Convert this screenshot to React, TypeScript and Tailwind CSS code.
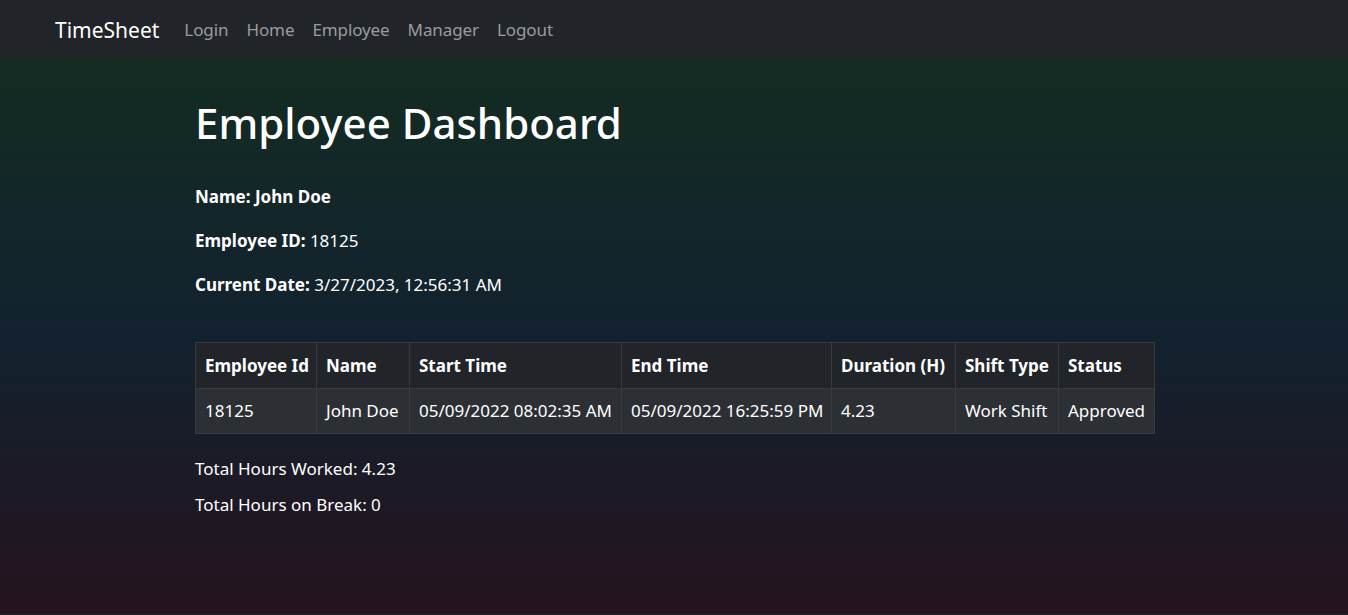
import React from 'react';

const navLinks = ['Login', 'Home', 'Employee', 'Manager', 'Logout'];

const columns: { label: string; width: string }[] = [
  { label: 'Employee Id', width: 'w-[121px]' },
  { label: 'Name', width: 'w-[93px]' },
  { label: 'Start Time', width: 'w-[212px]' },
  { label: 'End Time', width: 'w-[210px]' },
  { label: 'Duration (H)', width: 'w-[124px]' },
  { label: 'Shift Type', width: 'w-[103px]' },
  { label: 'Status', width: 'w-[96px]' },
];

const shifts = [
  {
    employeeId: '18125',
    name: 'John Doe',
    start: '05/09/2022 08:02:35 AM',
    end: '05/09/2022 16:25:59 PM',
    duration: '4.23',
    type: 'Work Shift',
    status: 'Approved',
  },
];

const InfoLine: React.FC<{ label: string; value?: string; allBold?: boolean }> = ({ label, value, allBold }) => (
  <p className={`text-[17px] leading-[24px] ${allBold ? 'font-bold' : ''}`}>
    <span className="font-bold">{label}</span>
    {value && <> {value}</>}
  </p>
);

export default function App() {
  return (
    <div className="min-h-screen bg-[#212529] text-white font-['Noto_Sans',sans-serif]">
      <nav className="h-[59px] bg-[#212529] flex items-center pl-[55px]">
        <span className="text-[21px] leading-[30px] text-white mr-[25px]">TimeSheet</span>
        <ul className="flex items-center gap-[18px]">
          {navLinks.map((link) => (
            <li key={link} className="text-[17px] leading-[24px] text-[#9a9b9d] tracking-[-0.1px]">
              {link}
            </li>
          ))}
        </ul>
      </nav>

      <main className="h-[555px] bg-[linear-gradient(to_bottom,#132c22_0%,#13222f_50%,#24131e_100%)]">
        <div className="w-[959px] ml-[195px] pt-[40px]">
          <h1 className="text-[42px] leading-[48px] font-medium">Employee Dashboard</h1>

          <div className="mt-[38px] flex flex-col gap-[20px]">
            <InfoLine label="Name: John Doe" allBold />
            <InfoLine label="Employee ID:" value="18125" />
            <InfoLine label="Current Date:" value="3/27/2023, 12:56:31 AM" />
          </div>

          <table className="mt-[45px] w-[959px] table-fixed border-collapse text-[17px] leading-[24px]">
            <thead>
              <tr className="bg-[#212529]">
                {columns.map((col) => (
                  <th
                    key={col.label}
                    className={`${col.width} border border-[#373b3e] px-[9px] pt-[11px] pb-[10px] text-left font-bold whitespace-nowrap`}
                  >
                    {col.label}
                  </th>
                ))}
              </tr>
            </thead>
            <tbody>
              {shifts.map((s) => (
                <tr key={s.employeeId + s.start} className="bg-[#2c3034]">
                  {[s.employeeId, s.name, s.start, s.end, s.duration, s.type, s.status].map((v, i) => (
                    <td key={i} className="border border-[#373b3e] px-[9px] py-[10px] whitespace-nowrap">
                      {v}
                    </td>
                  ))}
                </tr>
              ))}
            </tbody>
          </table>

          <div className="mt-[23px] flex flex-col gap-[12px] text-[17px] leading-[24px]">
            <p>Total Hours Worked: 4.23</p>
            <p>Total Hours on Break: 0</p>
          </div>
        </div>
      </main>
    </div>
  );
}
